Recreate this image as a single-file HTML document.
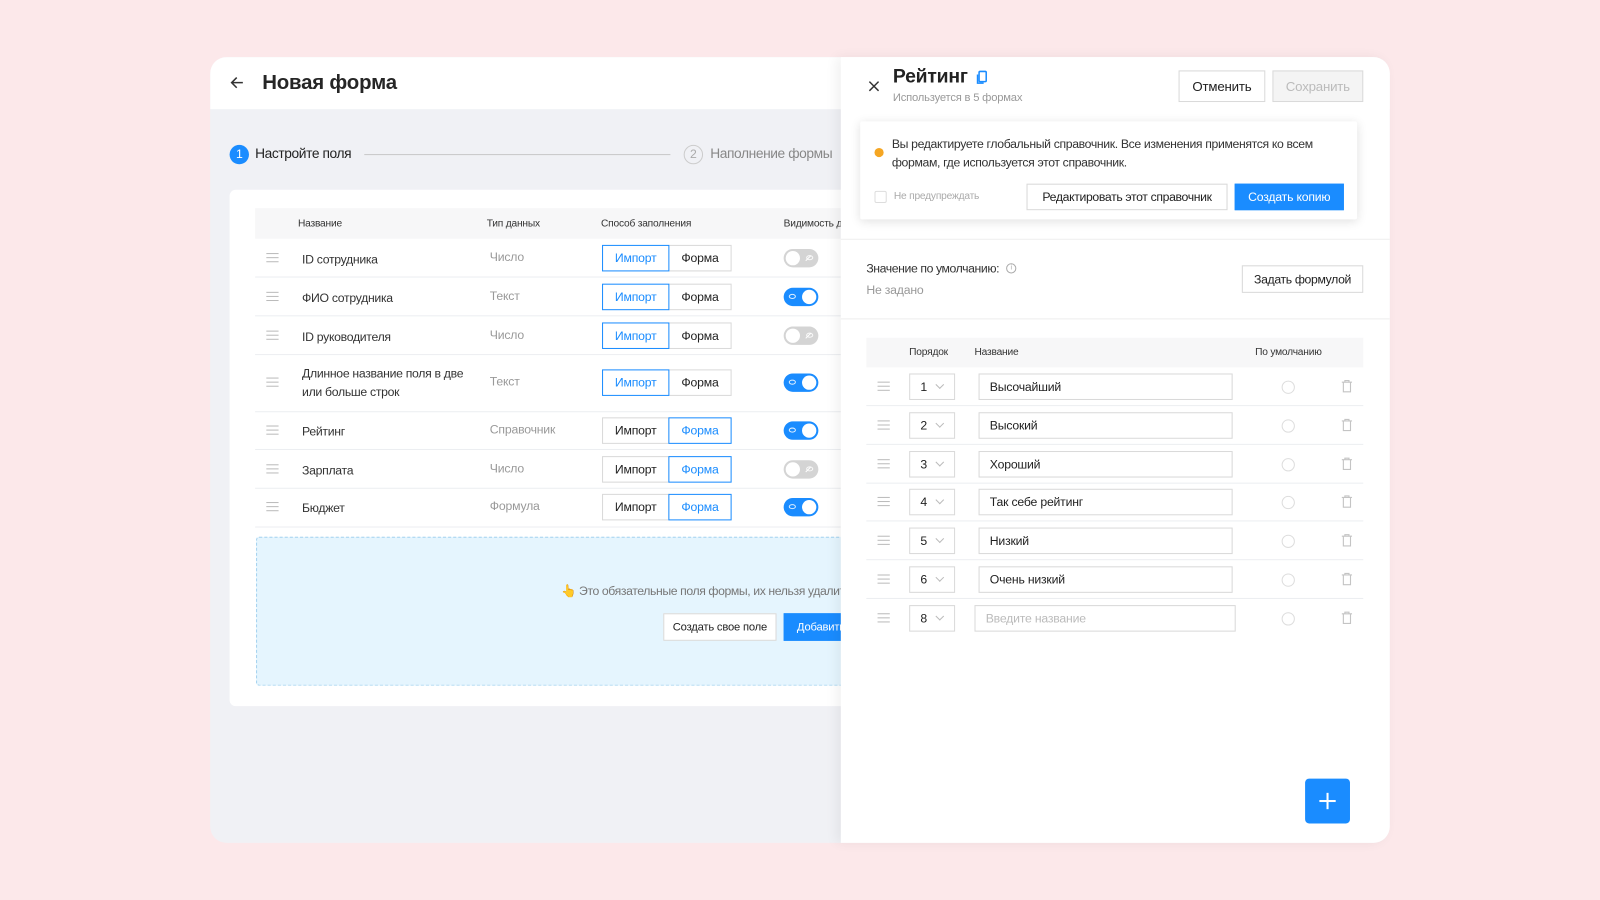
<!DOCTYPE html>
<html><head><meta charset="utf-8">
<style>
*{box-sizing:border-box;margin:0;padding:0}
html,body{width:1600px;height:900px;overflow:hidden;background:#fce8ea;font-family:"Liberation Sans",Arial,sans-serif;color:#222}
#w{position:absolute;left:0;top:0;width:1568px;height:882px;transform:scale(1.0204);transform-origin:0 0;letter-spacing:-0.2px}
.a{position:absolute}
.card{left:206px;top:56px;width:1156px;height:770px;border-radius:16px;background:#f0f1f5;overflow:hidden}
.hdr{left:0;top:0;width:1156px;height:51px;background:#fff}
.t{position:absolute;white-space:nowrap}
.btn{position:absolute;border:1px solid #d9d9d9;background:#fff;font-size:12px;display:flex;align-items:center;justify-content:center;color:#222}
.blue{background:#1a8cff;border-color:#1a8cff;color:#fff}
.sel{border-color:#1a8cff;color:#1a8cff;z-index:2}
.drag{position:absolute;width:12px;height:9px;border-top:1px solid #bbb;border-bottom:1px solid #bbb}
.drag:after{content:"";position:absolute;left:0;right:0;top:3px;border-top:1px solid #bbb}
.tg{position:absolute;width:34px;height:18px;border-radius:9px}
.tg i{position:absolute;top:2px;width:14px;height:14px;border-radius:50%;background:#fff}
.tg b{position:absolute;top:6px;width:7px;height:5px;border:1px solid rgba(255,255,255,.85);border-radius:50%}
</style></head><body><div id="w">
<div class="a card">
 <div class="a hdr"></div>
 <svg class="a" style="left:19px;top:18px" width="14" height="14" viewBox="0 0 14 14"><path d="M13 7H2M7 2L2 7l5 5" fill="none" stroke="#333" stroke-width="1.5"/></svg>
 <div class="t" style="left:51px;top:14px;font-size:20px;font-weight:bold;color:#262626">Новая форма</div>
 <div class="a" style="left:19px;top:86px;width:19px;height:19px;border-radius:50%;background:#1a8cff;color:#fff;font-size:12px;text-align:center;line-height:19px">1</div>
 <div class="t" style="left:44px;top:87px;font-size:13.5px;letter-spacing:-0.4px">Настройте поля</div>
 <div class="a" style="left:151px;top:95px;width:300px;border-top:1px solid #c8c8c8"></div>
 <div class="a" style="left:464px;top:86px;width:19px;height:19px;border-radius:50%;border:1px solid #ccc;color:#aaa;font-size:12px;text-align:center;line-height:17px">2</div>
 <div class="t" style="left:490px;top:87px;font-size:13.5px;color:#888;letter-spacing:-0.4px">Наполнение формы</div>
 <div class="a" style="left:19px;top:130px;width:640px;height:506px;background:#fff;border-radius:6px"></div>
</div>
<div class="a" style="left:250px;top:204px;width:574px;height:313px">
 <div class="a" style="left:0;top:0;width:574px;height:30px;background:#f7f7f8"></div>
 <div class="t" style="left:42px;top:10px;font-size:10px;color:#333">Название</div>
 <div class="t" style="left:227px;top:10px;font-size:10px;color:#333">Тип данных</div>
 <div class="t" style="left:339px;top:10px;font-size:10px;color:#333">Способ заполнения</div>
 <div class="t" style="left:518px;top:10px;font-size:10px;color:#333">Видимость д</div>
</div>
<div id="lrows"></div>
<div class="a" style="left:251px;top:526px;width:590px;height:146px;background:#e5f5fe;border:1px dashed #9dcfee;border-radius:3px"></div>
<div class="t" style="left:550px;top:572px;font-size:12px;color:#777;letter-spacing:-0.4px"><span style="color:#f0a020">👆</span> Это обязательные поля формы, их нельзя удалить</div>
<div class="btn" style="left:650px;top:601px;width:111px;height:27px;font-size:11px">Создать свое поле</div>
<div class="btn blue" style="left:768px;top:601px;width:80px;height:27px;font-size:11px;justify-content:flex-start;padding-left:12px">Добавить</div>

<div class="a" style="left:824px;top:56px;width:538px;height:770px;background:#fff;border-radius:0 16px 16px 0;box-shadow:-4px 0 12px rgba(0,0,0,.06)"></div>
<svg class="a" style="left:851px;top:79px" width="11" height="11" viewBox="0 0 11 11"><path d="M1 1l9 9M10 1l-9 9" stroke="#333" stroke-width="1.4"/></svg>
<div class="t" style="left:875px;top:65px;font-size:19px;font-weight:bold">Рейтинг</div>
<svg class="a" style="left:957px;top:69px" width="11" height="14" viewBox="0 0 11 14"><rect x="2.5" y="1" width="7" height="10" rx="1" fill="none" stroke="#1a8cff" stroke-width="1.5"/><path d="M1 4v8.5h6" fill="none" stroke="#1a8cff" stroke-width="1.5"/></svg>
<div class="t" style="left:875px;top:90px;font-size:11px;color:#999">Используется в 5 формах</div>
<div class="btn" style="left:1155px;top:69px;width:85px;height:31px;font-size:13px">Отменить</div>
<div class="btn" style="left:1247px;top:69px;width:89px;height:31px;font-size:13px;background:#f4f4f4;color:#bbb">Сохранить</div>
<div class="a" style="left:843px;top:119px;width:487px;height:96px;background:#fff;box-shadow:0 2px 10px rgba(0,0,0,.12);border-radius:2px"></div>
<div class="a" style="left:857px;top:145px;width:9px;height:9px;border-radius:50%;background:#f5a623"></div>
<div class="t" style="left:874px;top:132px;font-size:12px;line-height:18px;color:#333;letter-spacing:-0.35px">Вы редактируете глобальный справочник. Все изменения применятся ко всем<br>формам, где используется этот справочник.</div>
<div class="a" style="left:857px;top:187px;width:12px;height:12px;border:1px solid #ddd;border-radius:2px"></div>
<div class="t" style="left:876px;top:187px;font-size:10px;color:#aaa">Не предупреждать</div>
<div class="btn" style="left:1006px;top:180px;width:197px;height:26px;letter-spacing:-0.35px">Редактировать этот справочник</div>
<div class="btn blue" style="left:1210px;top:180px;width:107px;height:26px">Создать копию</div>
<div class="a" style="left:824px;top:234px;width:538px;border-top:1px solid #eee"></div>
<div class="t" style="left:849px;top:256px;font-size:12px;color:#333;letter-spacing:-0.4px">Значение по умолчанию:</div>
<div class="a" style="left:986px;top:258px;width:10px;height:10px;border:1px solid #aaa;border-radius:50%;font-size:7px;color:#aaa;text-align:center;line-height:8px">i</div>
<div class="t" style="left:849px;top:277px;font-size:12px;color:#999">Не задано</div>
<div class="btn" style="left:1217px;top:260px;width:119px;height:27px;letter-spacing:-0.35px">Задать формулой</div>
<div class="a" style="left:824px;top:312px;width:538px;border-top:1px solid #eee"></div>
<div class="a" style="left:849px;top:331px;width:487px;height:29px;background:#f7f7f8"></div>
<div class="t" style="left:891px;top:340px;font-size:10px;color:#333">Порядок</div>
<div class="t" style="left:955px;top:340px;font-size:10px;color:#333">Название</div>
<div class="t" style="left:1230px;top:340px;font-size:10px;color:#333">По умолчанию</div>
<div id="rrows"></div>
<div class="a" style="left:1279px;top:763px;width:44px;height:44px;background:#1a8cff;border-radius:4px"></div>
<div class="a" style="left:1293px;top:784px;width:16px;height:2px;background:#fff"></div>
<div class="a" style="left:1300px;top:777px;width:2px;height:16px;background:#fff"></div>

<script>
var L=[["ID сотрудника","Число",1,0,253,234,272],["ФИО сотрудника","Текст",1,1,291,272,310],["ID руководителя","Число",1,0,329,310,348],["Длинное название поля в две<br>или больше строк","Текст",1,1,375,348,404],["Рейтинг","Справочник",0,1,422,404,441],["Зарплата","Число",0,0,460,441,479],["Бюджет","Формула",0,1,497,479,517]];
var h="";
L.forEach(function(r){var c=r[4];
h+='<div class="a" style="left:250px;top:'+(r[6]-1)+'px;width:574px;border-top:1px solid #eceef1"></div>';
h+='<div class="drag" style="left:261px;top:'+(c-5)+'px"></div>';
h+='<div class="t" style="left:296px;top:'+(r[0].indexOf("<br>")>0?c-18:c-8)+'px;font-size:12px;line-height:18px;color:#333;letter-spacing:-0.3px">'+r[0]+'</div>';
h+='<div class="t" style="left:480px;top:'+(c-8)+'px;font-size:12px;color:#999">'+r[1]+'</div>';
h+='<div class="btn'+(r[2]?' sel':'')+'" style="left:590px;top:'+(c-13)+'px;width:66px;height:26px">Импорт</div>';
h+='<div class="btn'+(r[2]?'':' sel')+'" style="left:655px;top:'+(c-13)+'px;width:62px;height:26px">Форма</div>';
h+='<div class="tg" style="left:768px;top:'+(c-9)+'px;background:'+(r[3]?'#1a8cff':'#d4d4d4')+'"><b style="left:'+(r[3]?5:22)+'px"></b>'+(r[3]?'':'<b style="left:22px;border:none;border-top:1px solid #fff;transform:rotate(-45deg);top:8px;border-radius:0"></b>')+'<i style="left:'+(r[3]?18:2)+'px"></i></div>';
});
document.getElementById("lrows").innerHTML=h;
var R=[["1","Высочайший"],["2","Высокий"],["3","Хороший"],["4","Так себе рейтинг"],["5","Низкий"],["6","Очень низкий"],["8",""]];
h="";
R.forEach(function(r,i){var c=379+i*37.8;
if(i<6)h+='<div class="a" style="left:849px;top:'+(c+18)+'px;width:487px;border-top:1px solid #eceef1"></div>';
h+='<div class="drag" style="left:860px;top:'+(c-5)+'px"></div>';
h+='<div class="btn" style="left:891px;top:'+(c-13)+'px;width:45px;height:26px;justify-content:flex-start;padding-left:10px">'+r[0]+'<span style="margin-left:10px;width:6px;height:6px;border-right:1px solid #bbb;border-bottom:1px solid #bbb;transform:rotate(45deg);margin-top:-4px"></span></div>';
if(r[1])h+='<div class="btn" style="left:959px;top:'+(c-13)+'px;width:249px;height:26px;justify-content:flex-start;padding-left:10px">'+r[1]+'</div>';
else h+='<div class="btn" style="left:955px;top:'+(c-13)+'px;width:256px;height:26px;justify-content:flex-start;padding-left:10px;color:#bbb">Введите название</div>';
h+='<div class="a" style="left:1256px;top:'+(c-6)+'px;width:13px;height:13px;border:1px solid #ddd;border-radius:50%"></div>';
h+='<svg class="a" style="left:1314px;top:'+(c-7)+'px" width="12" height="13" viewBox="0 0 12 13"><path d="M1 2.5h10M4 2.5V1h4v1.5M2.5 2.5v9.5h7V2.5" fill="none" stroke="#c4c4c4" stroke-width="1.1"/></svg>';
});
document.getElementById("rrows").innerHTML=h;
</script>
</div></body></html>
